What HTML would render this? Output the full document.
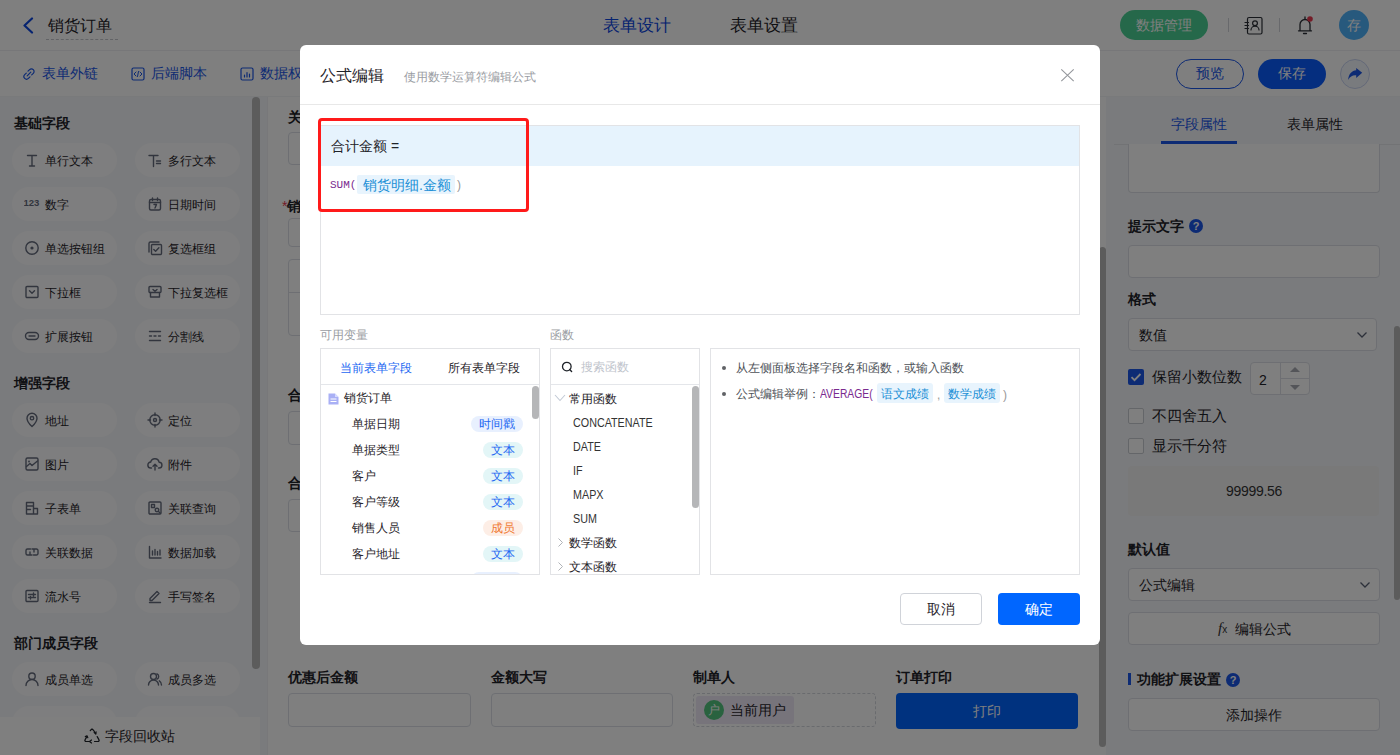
<!DOCTYPE html>
<html><head><meta charset="utf-8">
<style>
*{box-sizing:border-box;margin:0;padding:0}
html,body{width:1400px;height:755px;overflow:hidden;background:#fff;font-family:"Liberation Sans",sans-serif;color:#1f2329}
.abs{position:absolute}
.t{position:absolute;white-space:nowrap;line-height:1}
.b{font-weight:bold}
#hdr{position:absolute;left:0;top:0;width:1400px;height:51px;background:#fff;border-bottom:1px solid #eeeff2}
#tb{position:absolute;left:0;top:51px;width:1400px;height:46px;background:#fff;border-bottom:1px solid #f3f4f6}
#side{position:absolute;left:0;top:97px;width:268px;height:658px;background:#f5f7fa;border-right:1px solid #f0f1f4}
#canvas{position:absolute;left:268px;top:97px;width:838px;height:658px;background:#fff}
#rp{position:absolute;left:1106px;top:97px;width:294px;height:658px;background:#f5f7fa}
#ov{position:absolute;left:0;top:0;width:1400px;height:755px;background:rgba(0,0,0,.5)}
#modal{position:absolute;left:300px;top:45px;width:800px;height:600px;background:#fff;border-radius:6px}
.pill{position:absolute;width:105px;height:34px;border-radius:17px;background:#fdfdfe}
.pill .ic{position:absolute;left:12px;top:9px}
.pill span{position:absolute;left:33px;top:12px;font-size:12px;line-height:12px;white-space:nowrap;color:#1f2329}
.inp{position:absolute;border:1px solid #dcdfe6;border-radius:4px;background:#fff}
.lbl{position:absolute;white-space:nowrap;line-height:1;font-size:14px;font-weight:bold;color:#1f2329}
.tag{position:absolute;height:16px;border-radius:8px;font-size:12px;line-height:17px;text-align:center}
.fn{position:absolute;left:22px;font-size:12.5px;line-height:12px;color:#333;white-space:nowrap;transform:scaleX(.86);transform-origin:0 0}
</style></head><body>
<div id="hdr">
  <svg class="abs" style="left:22px;top:17px" width="12" height="17" viewBox="0 0 12 17"><path d="M10 1.5 L2.5 8.5 L10 15.5" fill="none" stroke="#0d47e0" stroke-width="2.2" stroke-linecap="round" stroke-linejoin="round"/></svg>
  <div class="t" style="left:48px;top:18px;font-size:16px;color:#1f2329">销货订单</div>
  <div class="abs" style="left:46px;top:39px;width:72px;border-top:1px dashed #c4c7cc"></div>
  <div class="t" style="left:603px;top:17px;font-size:16.5px;color:#0d47e0">表单设计</div>
  <div class="t" style="left:730px;top:17px;font-size:16.5px;color:#1f2329">表单设置</div>
  <div class="abs" style="left:1120px;top:10px;width:88px;height:30px;border-radius:15px;background:#4ad194"></div>
  <div class="t" style="left:1136px;top:18px;font-size:14px;color:#fff">数据管理</div>
  <div class="abs" style="left:1228px;top:18px;width:1px;height:14px;background:#d0d3d9"></div>
  <svg class="abs" style="left:1243px;top:16px" width="20" height="19" viewBox="0 0 20 19"><rect x="4.5" y="1.5" width="14.5" height="16.5" rx="1.5" fill="none" stroke="#2b2f36" stroke-width="1.2"/><circle cx="12" cy="7.2" r="2.4" fill="none" stroke="#2b2f36" stroke-width="1.2"/><path d="M8 14a4 3.8 0 0 1 8 0M2 6.5h3.5M2 9.5h3.5M2 12.5h3.5" fill="none" stroke="#2b2f36" stroke-width="1.2" stroke-linecap="round"/></svg>
  <div class="abs" style="left:1279px;top:18px;width:1px;height:14px;background:#d0d3d9"></div>
  <svg class="abs" style="left:1296px;top:15px" width="18" height="20" viewBox="0 0 18 20"><path d="M4 15.5V9.5a5 5 0 0 1 10 0v6M2.5 15.8h13" fill="none" stroke="#2b2f36" stroke-width="1.3" stroke-linecap="round" stroke-linejoin="round"/><path d="M7.5 18.5h3M9 2v2" stroke="#2b2f36" stroke-width="1.3" stroke-linecap="round"/><circle cx="14" cy="4" r="2.8" fill="#e8384f"/></svg>
  <div class="abs" style="left:1339px;top:10px;width:30px;height:30px;border-radius:15px;background:#4fb2fa"></div>
  <div class="t" style="left:1347px;top:18px;font-size:14px;color:#fff">存</div>
</div>
<div id="tb">
  <svg class="abs" style="left:22px;top:16px" width="14" height="14" viewBox="0 0 14 14"><path d="M6 4.2l1.6-1.6a2.6 2.6 0 0 1 3.7 3.7L9.7 7.9M8 9.8l-1.6 1.6a2.6 2.6 0 0 1-3.7-3.7L4.3 6.1M5.2 8.8l3.6-3.6" fill="none" stroke="#1a56e8" stroke-width="1.2" stroke-linecap="round"/></svg>
  <div class="t" style="left:42px;top:15px;font-size:14px;color:#1a56e8">表单外链</div>
  <svg class="abs" style="left:131px;top:16px" width="14" height="14" viewBox="0 0 14 14"><rect x="1" y="1" width="12" height="12" rx="1.5" fill="none" stroke="#1a56e8" stroke-width="1.2"/><path d="M5 5L3 7l2 2M9 5l2 2-2 2M7.5 4.5l-1 5" fill="none" stroke="#1a56e8" stroke-width="1" stroke-linecap="round"/></svg>
  <div class="t" style="left:151px;top:15px;font-size:14px;color:#1a56e8">后端脚本</div>
  <svg class="abs" style="left:240px;top:16px" width="14" height="14" viewBox="0 0 14 14"><rect x="1" y="1" width="12" height="12" rx="1.5" fill="none" stroke="#1a56e8" stroke-width="1.2"/><path d="M4.5 10V8M7 10V5.5M9.5 10V7" fill="none" stroke="#1a56e8" stroke-width="1.2" stroke-linecap="round"/></svg>
  <div class="t" style="left:260px;top:15px;font-size:14px;color:#1a56e8">数据权限</div>
  <div class="abs" style="left:1176px;top:8px;width:68px;height:30px;border-radius:15px;border:1px solid #1a56e8;background:#fff"></div>
  <div class="t" style="left:1196px;top:15px;font-size:14px;color:#1a56e8">预览</div>
  <div class="abs" style="left:1258px;top:8px;width:68px;height:30px;border-radius:15px;background:#0a5cff"></div>
  <div class="t" style="left:1278px;top:15px;font-size:14px;color:#fff">保存</div>
  <div class="abs" style="left:1340px;top:8px;width:30px;height:30px;border-radius:15px;border:1px solid #c8d3f0;background:#f3f6fd"></div>
  <svg class="abs" style="left:1347px;top:13px" width="17" height="17" viewBox="0 0 17 17"><path d="M1.2 15.9C1.5 10 5 6.5 9.2 6.2V4l6 4.8-6 5.1v-2.6C5.5 11 3 12.5 1.2 15.9z" fill="#1a56e8"/></svg>
</div>
<div id="side">
<div class="t b" style="left:14px;top:19px;font-size:14px">基础字段</div>
<div class="pill" style="left:12px;top:46px"><svg class="ic" width="16" height="16" viewBox="0 0 16 16"><path d="M3.5 3.5h9M5.5 14h5M8 3.5v10.5" fill="none" stroke="#646b7d" stroke-width="1.4" stroke-linecap="round" stroke-linejoin="round"/></svg><span>单行文本</span></div>
<div class="pill" style="left:135px;top:46px"><svg class="ic" width="16" height="16" viewBox="0 0 16 16"><path d="M2 3.5h9M6.5 3.5v11M9.5 9h4M9.5 11.5h4" fill="none" stroke="#646b7d" stroke-width="1.4" stroke-linecap="round" stroke-linejoin="round"/></svg><span>多行文本</span></div>
<div class="pill" style="left:12px;top:90px"><svg class="ic" width="16" height="16" viewBox="0 0 16 16"><text x="-0.5" y="10" font-family="Liberation Sans" font-weight="bold" font-size="9.5" fill="#646b7d">123</text></svg><span>数字</span></div>
<div class="pill" style="left:135px;top:90px"><svg class="ic" width="16" height="16" viewBox="0 0 16 16"><rect x="2.5" y="3.5" width="11" height="10.5" rx="1.5" fill="none" stroke="#646b7d" stroke-width="1.4" stroke-linecap="round" stroke-linejoin="round"/><path d="M2.5 6.5h11M5.5 2v2.5M10.5 2v2.5M7 8.5h2.5L8 12" fill="none" stroke="#646b7d" stroke-width="1.4" stroke-linecap="round" stroke-linejoin="round"/></svg><span>日期时间</span></div>
<div class="pill" style="left:12px;top:134px"><svg class="ic" width="16" height="16" viewBox="0 0 16 16"><circle cx="8" cy="8" r="6.2" fill="none" stroke="#646b7d" stroke-width="1.4" stroke-linecap="round" stroke-linejoin="round"/><circle cx="8" cy="8" r="1.6" fill="#646b7d"/></svg><span>单选按钮组</span></div>
<div class="pill" style="left:135px;top:134px"><svg class="ic" width="16" height="16" viewBox="0 0 16 16"><path d="M2 12V3.5Q2 2 3.5 2H12" fill="none" stroke="#646b7d" stroke-width="1.4" stroke-linecap="round" stroke-linejoin="round"/><rect x="4.5" y="4.5" width="10" height="10" rx="1" fill="none" stroke="#646b7d" stroke-width="1.4" stroke-linecap="round" stroke-linejoin="round"/><path d="M6.8 9.5l1.8 1.8 3.3-3.5" fill="none" stroke="#646b7d" stroke-width="1.4" stroke-linecap="round" stroke-linejoin="round"/></svg><span>复选框组</span></div>
<div class="pill" style="left:12px;top:178px"><svg class="ic" width="16" height="16" viewBox="0 0 16 16"><rect x="2" y="2.5" width="12" height="11" rx="1" fill="none" stroke="#646b7d" stroke-width="1.4" stroke-linecap="round" stroke-linejoin="round"/><path d="M5.5 6.8L8 9.2l2.5-2.4" fill="none" stroke="#646b7d" stroke-width="1.4" stroke-linecap="round" stroke-linejoin="round"/></svg><span>下拉框</span></div>
<div class="pill" style="left:135px;top:178px"><svg class="ic" width="16" height="16" viewBox="0 0 16 16"><rect x="2" y="2.5" width="12" height="6" rx="1" fill="none" stroke="#646b7d" stroke-width="1.4" stroke-linecap="round" stroke-linejoin="round"/><path d="M3.5 8.5v4.5h9V8.5M6 5.5l2 1.8 2-1.8" fill="none" stroke="#646b7d" stroke-width="1.4" stroke-linecap="round" stroke-linejoin="round"/></svg><span>下拉复选框</span></div>
<div class="pill" style="left:12px;top:222px"><svg class="ic" width="16" height="16" viewBox="0 0 16 16"><rect x="1.5" y="4.5" width="13" height="7" rx="3.5" fill="none" stroke="#646b7d" stroke-width="1.4" stroke-linecap="round" stroke-linejoin="round"/><path d="M5 8h6" fill="none" stroke="#646b7d" stroke-width="1.4" stroke-linecap="round" stroke-linejoin="round"/></svg><span>扩展按钮</span></div>
<div class="pill" style="left:135px;top:222px"><svg class="ic" width="16" height="16" viewBox="0 0 16 16"><path d="M2.5 3.5h11M2.5 12.5h11M2.5 8h2M7 8h2M11.5 8h2" fill="none" stroke="#646b7d" stroke-width="1.4" stroke-linecap="round" stroke-linejoin="round"/></svg><span>分割线</span></div>
<div class="t b" style="left:14px;top:279px;font-size:14px">增强字段</div>
<div class="pill" style="left:12px;top:306px"><svg class="ic" width="16" height="16" viewBox="0 0 16 16"><path d="M8 14.5s-5-4.6-5-8.3a5 5 0 0 1 10 0c0 3.7-5 8.3-5 8.3z" fill="none" stroke="#646b7d" stroke-width="1.4" stroke-linecap="round" stroke-linejoin="round"/><circle cx="8" cy="6.2" r="1.7" fill="none" stroke="#646b7d" stroke-width="1.4" stroke-linecap="round" stroke-linejoin="round"/></svg><span>地址</span></div>
<div class="pill" style="left:135px;top:306px"><svg class="ic" width="16" height="16" viewBox="0 0 16 16"><circle cx="8" cy="8" r="5.2" fill="none" stroke="#646b7d" stroke-width="1.4" stroke-linecap="round" stroke-linejoin="round"/><circle cx="8" cy="8" r="1.5" fill="none" stroke="#646b7d" stroke-width="1.4" stroke-linecap="round" stroke-linejoin="round"/><path d="M8 1v2.5M8 12.5V15M1 8h2.5M12.5 8H15" fill="none" stroke="#646b7d" stroke-width="1.4" stroke-linecap="round" stroke-linejoin="round"/></svg><span>定位</span></div>
<div class="pill" style="left:12px;top:350px"><svg class="ic" width="16" height="16" viewBox="0 0 16 16"><rect x="2" y="2" width="12" height="12" rx="1.5" fill="none" stroke="#646b7d" stroke-width="1.4" stroke-linecap="round" stroke-linejoin="round"/><path d="M2.5 10.5l3.5-3 2 2 5.5-4.5" fill="none" stroke="#646b7d" stroke-width="1.4" stroke-linecap="round" stroke-linejoin="round"/><circle cx="5" cy="5.5" r="0.9" fill="#646b7d"/></svg><span>图片</span></div>
<div class="pill" style="left:135px;top:350px"><svg class="ic" width="16" height="16" viewBox="0 0 16 16"><path d="M4.5 12H4a3 3 0 0 1-.3-6 4.3 4.3 0 0 1 8.4.2A2.9 2.9 0 0 1 12 12h-.5" fill="none" stroke="#646b7d" stroke-width="1.4" stroke-linecap="round" stroke-linejoin="round"/><path d="M8 14V8.5M6 10.2l2-2 2 2" fill="none" stroke="#646b7d" stroke-width="1.4" stroke-linecap="round" stroke-linejoin="round"/></svg><span>附件</span></div>
<div class="pill" style="left:12px;top:394px"><svg class="ic" width="16" height="16" viewBox="0 0 16 16"><path d="M2.5 14V2.5h7V14zM9.5 8.5h4V14h-11M2.5 6h7M2.5 9.5h4" fill="none" stroke="#646b7d" stroke-width="1.4" stroke-linecap="round" stroke-linejoin="round"/></svg><span>子表单</span></div>
<div class="pill" style="left:135px;top:394px"><svg class="ic" width="16" height="16" viewBox="0 0 16 16"><rect x="2" y="2" width="12" height="12" rx="1" fill="none" stroke="#646b7d" stroke-width="1.4" stroke-linecap="round" stroke-linejoin="round"/><rect x="4.5" y="4.5" width="3" height="3" fill="none" stroke="#646b7d" stroke-width="1.4" stroke-linecap="round" stroke-linejoin="round"/><circle cx="10" cy="10" r="1.8" fill="none" stroke="#646b7d" stroke-width="1.4" stroke-linecap="round" stroke-linejoin="round"/><path d="M11.3 11.3l2 2" fill="none" stroke="#646b7d" stroke-width="1.4" stroke-linecap="round" stroke-linejoin="round"/></svg><span>关联查询</span></div>
<div class="pill" style="left:12px;top:438px"><svg class="ic" width="16" height="16" viewBox="0 0 16 16"><path d="M6.5 5H3.5a1.5 1.5 0 0 0-1.5 1.5v3A1.5 1.5 0 0 0 3.5 11H8M9.5 11h3a1.5 1.5 0 0 0 1.5-1.5v-3A1.5 1.5 0 0 0 12.5 5H8M6 8v3M10 5v3" fill="none" stroke="#646b7d" stroke-width="1.4" stroke-linecap="round" stroke-linejoin="round"/></svg><span>关联数据</span></div>
<div class="pill" style="left:135px;top:438px"><svg class="ic" width="16" height="16" viewBox="0 0 16 16"><path d="M2.5 2.5v11.5h11.5M5.5 11V7M8 11V5.5M10.5 11V7.5M13 11V6" fill="none" stroke="#646b7d" stroke-width="1.4" stroke-linecap="round" stroke-linejoin="round"/></svg><span>数据加载</span></div>
<div class="pill" style="left:12px;top:482px"><svg class="ic" width="16" height="16" viewBox="0 0 16 16"><rect x="2" y="2.5" width="12" height="11" rx="1" fill="none" stroke="#646b7d" stroke-width="1.4" stroke-linecap="round" stroke-linejoin="round"/><path d="M4.5 6.5h7M4.5 9.5h7M9.5 5v3M6.5 8.5v2.5" fill="none" stroke="#646b7d" stroke-width="1.4" stroke-linecap="round" stroke-linejoin="round"/></svg><span>流水号</span></div>
<div class="pill" style="left:135px;top:482px"><svg class="ic" width="16" height="16" viewBox="0 0 16 16"><path d="M3 10.5l7-7 2 2-7 7H3zM2.5 14.5h11" fill="none" stroke="#646b7d" stroke-width="1.4" stroke-linecap="round" stroke-linejoin="round"/></svg><span>手写签名</span></div>
<div class="t b" style="left:14px;top:539px;font-size:14px">部门成员字段</div>
<div class="pill" style="left:12px;top:565px"><svg class="ic" width="16" height="16" viewBox="0 0 16 16"><circle cx="8" cy="5.2" r="3.2" fill="none" stroke="#646b7d" stroke-width="1.4" stroke-linecap="round" stroke-linejoin="round"/><path d="M2 14.5a6 6 0 0 1 12 0" fill="none" stroke="#646b7d" stroke-width="1.4" stroke-linecap="round" stroke-linejoin="round"/></svg><span>成员单选</span></div>
<div class="pill" style="left:135px;top:565px"><svg class="ic" width="16" height="16" viewBox="0 0 16 16"><circle cx="6.5" cy="5.5" r="3" fill="none" stroke="#646b7d" stroke-width="1.4" stroke-linecap="round" stroke-linejoin="round"/><path d="M1.5 14a5 5 0 0 1 10 0M10 2.8a3 3 0 0 1 0 5.4M12.3 9.8A5 5 0 0 1 14.5 14" fill="none" stroke="#646b7d" stroke-width="1.4" stroke-linecap="round" stroke-linejoin="round"/></svg><span>成员多选</span></div>
<div class="pill" style="left:12px;top:609px"></div><div class="pill" style="left:135px;top:609px"></div>
  <div class="abs" style="left:252px;top:0;width:8px;height:572px;border-radius:4px;background:#b9b9b9"></div>
  <div class="abs" style="left:0;top:620px;width:260px;height:38px;background:#fff"></div>
  <svg class="abs" style="left:84px;top:631px" width="16" height="16" viewBox="0 0 16 16"><path d="M6.3 2.5L8 0.9l1.7 1.6 2 3.4M13.2 8.6l1.7 3a1.2 1.2 0 0 1-1 1.9H10.5M5.3 13.5H2.1a1.2 1.2 0 0 1-1-1.9l1.8-3" fill="none" stroke="#1f2329" stroke-width="1.2" stroke-linecap="round" stroke-linejoin="round"/><path d="M10.2 4.5l1.6 1.4.3-2M3.8 9.7L3 7.8 1.3 8.6M7.5 12l-2 1.5 2 1.5" fill="none" stroke="#1f2329" stroke-width="1.2" stroke-linecap="round" stroke-linejoin="round"/></svg>
  <div class="t" style="left:105px;top:632px;font-size:14px;color:#1f2329">字段回收站</div>
</div>
<div id="canvas">
  <div class="lbl" style="left:20px;top:13px">关联</div>
  <div class="inp" style="left:20px;top:35px;width:183px;height:33px"></div>
  <div class="lbl" style="left:14px;top:102px"><span style="color:#e8384f;font-weight:normal">*</span>销货明细</div>
  <div class="inp" style="left:20px;top:121px;width:200px;height:29px"></div>
  <div class="inp" style="left:20px;top:162px;width:200px;height:77px"></div>
  <div class="abs" style="left:20px;top:195px;width:200px;height:1px;background:#dcdfe6"></div>
  <div class="lbl" style="left:20px;top:291px">合计</div>
  <div class="inp" style="left:20px;top:314px;width:183px;height:34px"></div>
  <div class="lbl" style="left:20px;top:379px">合计</div>
  <div class="inp" style="left:20px;top:402px;width:183px;height:33px"></div>
  <div class="lbl" style="left:20px;top:573px">优惠后金额</div>
  <div class="inp" style="left:20px;top:596px;width:183px;height:34px"></div>
  <div class="lbl" style="left:223px;top:573px">金额大写</div>
  <div class="inp" style="left:223px;top:596px;width:182px;height:34px"></div>
  <div class="lbl" style="left:425px;top:573px">制单人</div>
  <div class="abs" style="left:425px;top:596px;width:183px;height:34px;border:1px dashed #d3d6dc;border-radius:4px"></div>
  <div class="abs" style="left:428px;top:599px;width:98px;height:28px;border-radius:3px;background:#efe9f7"></div>
  <div class="abs" style="left:436px;top:603px;width:20px;height:20px;border-radius:10px;background:#52c47e"></div>
  <div class="t" style="left:440px;top:607px;font-size:12px;color:#fff">户</div>
  <div class="t" style="left:462px;top:606px;font-size:14px;color:#1f2329">当前用户</div>
  <div class="lbl" style="left:628px;top:573px">订单打印</div>
  <div class="abs" style="left:628px;top:596px;width:182px;height:36px;border-radius:4px;background:#0064ff"></div>
  <div class="t" style="left:705px;top:607px;font-size:14px;color:#fff">打印</div>
  <div class="abs" style="left:831px;top:150px;width:7px;height:500px;border-radius:4px;background:#b9b9b9"></div>
</div>
<div id="rp">
  <div class="t" style="left:65px;top:20px;font-size:14px;color:#1a56e8">字段属性</div>
  <div class="t" style="left:181px;top:20px;font-size:14px;color:#1f2329">表单属性</div>
  <div class="abs" style="left:8px;top:47px;width:286px;height:1px;background:#e4e6ea"></div>
  <div class="abs" style="left:55px;top:44px;width:76px;height:3px;background:#1a56e8"></div>
  <div class="inp" style="left:22px;top:47px;width:252px;height:49px;border-top:none;border-radius:0 0 4px 4px"></div>
  <div class="lbl" style="left:22px;top:122px">提示文字</div>
  <div class="abs" style="left:83px;top:122px;width:14px;height:14px;border-radius:7px;background:#1a56e8;color:#fff;font-size:11px;line-height:14px;text-align:center;font-weight:bold">?</div>
  <div class="inp" style="left:22px;top:148px;width:252px;height:33px"></div>
  <div class="lbl" style="left:22px;top:195px">格式</div>
  <div class="inp" style="left:22px;top:221px;width:249px;height:33px"></div>
  <div class="t" style="left:33px;top:231px;font-size:14px">数值</div>
  <svg class="abs" style="left:250px;top:234px" width="12" height="8" viewBox="0 0 12 8"><path d="M1.5 1.5L6 6l4.5-4.5" fill="none" stroke="#5b6275" stroke-width="1.3"/></svg>
  <div class="abs" style="left:22px;top:272px;width:16px;height:16px;border-radius:2px;background:#1a56e8"></div>
  <svg class="abs" style="left:22px;top:272px" width="16" height="16" viewBox="0 0 16 16"><path d="M3.5 8.2l3 3 6-6.2" fill="none" stroke="#fff" stroke-width="1.8"/></svg>
  <div class="t" style="left:46px;top:273px;font-size:14.5px">保留小数位数</div>
  <div class="inp" style="left:144px;top:265px;width:60px;height:33px"></div>
  <div class="abs" style="left:174px;top:266px;width:1px;height:31px;background:#dcdfe6"></div>
  <div class="abs" style="left:175px;top:281px;width:28px;height:1px;background:#dcdfe6"></div>
  <div class="t" style="left:153px;top:276px;font-size:14px">2</div>
  <svg class="abs" style="left:183px;top:269px" width="12" height="26" viewBox="0 0 12 26"><path d="M1 6h10L6 1z" fill="#a8abb2"/><path d="M1 19h10L6 24z" fill="#a8abb2"/></svg>
  <div class="abs" style="left:22px;top:311px;width:16px;height:16px;border-radius:2px;border:1px solid #c9ccd2;background:#fff"></div>
  <div class="t" style="left:46px;top:312px;font-size:14.5px">不四舍五入</div>
  <div class="abs" style="left:22px;top:341px;width:16px;height:16px;border-radius:2px;border:1px solid #c9ccd2;background:#fff"></div>
  <div class="t" style="left:46px;top:342px;font-size:14.5px">显示千分符</div>
  <div class="abs" style="left:22px;top:369px;width:251px;height:50px;border-radius:4px;background:#f3f3f3"></div>
  <div class="t" style="left:120px;top:387px;font-size:14px;color:#333;letter-spacing:-0.3px">99999.56</div>
  <div class="lbl" style="left:22px;top:445px">默认值</div>
  <div class="inp" style="left:22px;top:471px;width:252px;height:33px"></div>
  <div class="t" style="left:33px;top:481px;font-size:14px">公式编辑</div>
  <svg class="abs" style="left:253px;top:484px" width="12" height="8" viewBox="0 0 12 8"><path d="M1.5 1.5L6 6l4.5-4.5" fill="none" stroke="#5b6275" stroke-width="1.3"/></svg>
  <div class="inp" style="left:22px;top:515px;width:252px;height:33px"></div>
  <div class="t" style="left:112px;top:524px;font-size:15px;font-family:'Liberation Serif',serif;font-style:italic;color:#333">f<span style="font-size:10px;font-style:normal;font-family:'Liberation Sans',sans-serif">x</span></div>
  <div class="t" style="left:129px;top:525px;font-size:14px">编辑公式</div>
  <div class="abs" style="left:22px;top:576px;width:3px;height:12px;background:#1a56e8"></div>
  <div class="lbl" style="left:31px;top:575px">功能扩展设置</div>
  <div class="abs" style="left:120px;top:576px;width:14px;height:14px;border-radius:7px;background:#1a56e8;color:#fff;font-size:11px;line-height:14px;text-align:center;font-weight:bold">?</div>
  <div class="inp" style="left:22px;top:601px;width:252px;height:33px"></div>
  <div class="t" style="left:120px;top:611px;font-size:14px">添加操作</div>
  <div class="abs" style="left:288px;top:229px;width:6px;height:274px;border-radius:3px;background:#b9b9b9"></div>
</div>
<div id="ov"></div>
<div id="modal">
  <div class="t" style="left:20px;top:23px;font-size:16px;color:#1f2329">公式编辑</div>
  <div class="t" style="left:104px;top:26px;font-size:12px;color:#9a9da3">使用数学运算符编辑公式</div>
  <svg class="abs" style="left:760px;top:23px" width="15" height="14" viewBox="0 0 15 14"><path d="M1.3 1.3l12.4 11.8M13.7 1.3L1.3 13.1" stroke="#94979c" stroke-width="1.1"/></svg>
  <div class="abs" style="left:0;top:59px;width:800px;height:1px;background:#e8e8e8"></div>
  <!-- editor -->
  <div class="abs" style="left:20px;top:80px;width:760px;height:190px;border:1px solid #e2e3e6"></div>
  <div class="abs" style="left:21px;top:81px;width:758px;height:40px;background:#e6f3fd"></div>
  <div class="t" style="left:31px;top:94px;font-size:14px;color:#1f2329">合计金额 =</div>
  <div class="t" style="left:30px;top:135px;font-size:11px;font-family:'Liberation Mono',monospace;color:#7a2a8f">SUM(</div>
  <div class="abs" style="left:57px;top:130px;width:98px;height:19px;border-radius:2px;background:#e8f4fd"></div>
  <div class="t" style="left:63px;top:133px;font-size:14px;color:#1a8fd6">销货明细.金额</div>
  <div class="t" style="left:157px;top:134px;font-size:12px;color:#999">)</div>
  <div class="abs" style="left:18px;top:73px;width:211px;height:94px;border:3px solid #ff1a1a;border-radius:4px"></div>
  <!-- labels -->
  <div class="t" style="left:20px;top:284px;font-size:12px;color:#9a9da3">可用变量</div>
  <div class="t" style="left:250px;top:284px;font-size:12px;color:#9a9da3">函数</div>
  <!-- vars panel -->
  <div class="abs" style="left:20px;top:303px;width:220px;height:227px;border:1px solid #e2e3e6;overflow:hidden">
    <div class="t" style="left:19px;top:13px;font-size:12px;color:#2468f2">当前表单字段</div>
    <div class="t" style="left:127px;top:13px;font-size:12px;color:#1f2329">所有表单字段</div>
    <div class="abs" style="left:0;top:35px;width:220px;height:1px;background:#e4e6ea"></div>
    <svg class="abs" style="left:7px;top:44px" width="11" height="12" viewBox="0 0 11 12"><path d="M0.5 0.5h6.5l3.5 3.5v7.5h-10z" fill="#a9b0f5"/><path d="M2.5 6h6M2.5 8.5h6" stroke="#fff" stroke-width="1"/><path d="M7 0.5v3.5h3.5" fill="#d6daff"/></svg>
    <div class="t" style="left:23px;top:43px;font-size:12px;color:#1f2329">销货订单</div>
    <div class="t" style="left:31px;top:69px;font-size:12px;color:#1f2329">单据日期</div>
    <div class="tag" style="left:150px;top:67px;width:52px;background:#e8f0fe;color:#2468f2">时间戳</div>
    <div class="t" style="left:31px;top:95px;font-size:12px;color:#1f2329">单据类型</div>
    <div class="tag" style="left:162px;top:93px;width:40px;background:#e3f6f7;color:#2468f2">文本</div>
    <div class="t" style="left:31px;top:121px;font-size:12px;color:#1f2329">客户</div>
    <div class="tag" style="left:162px;top:119px;width:40px;background:#e3f6f7;color:#2468f2">文本</div>
    <div class="t" style="left:31px;top:147px;font-size:12px;color:#1f2329">客户等级</div>
    <div class="tag" style="left:162px;top:145px;width:40px;background:#e3f6f7;color:#2468f2">文本</div>
    <div class="t" style="left:31px;top:173px;font-size:12px;color:#1f2329">销售人员</div>
    <div class="tag" style="left:162px;top:171px;width:40px;background:#fdeee6;color:#f0782f">成员</div>
    <div class="t" style="left:31px;top:199px;font-size:12px;color:#1f2329">客户地址</div>
    <div class="tag" style="left:162px;top:197px;width:40px;background:#e3f6f7;color:#2468f2">文本</div>
    <div class="tag" style="left:150px;top:223px;width:52px;background:#e8f0fe"></div>
    <div class="abs" style="left:211px;top:37px;width:7px;height:33px;border-radius:4px;background:#b5b6b8"></div>
  </div>
  <!-- func panel -->
  <div class="abs" style="left:250px;top:303px;width:150px;height:227px;border:1px solid #e2e3e6;overflow:hidden">
    <svg class="abs" style="left:10px;top:12px" width="12" height="12" viewBox="0 0 12 12"><circle cx="5.8" cy="5.6" r="4.3" fill="none" stroke="#1f2329" stroke-width="1.3"/><path d="M8.6 8.6l2 2" stroke="#1f2329" stroke-width="1.4" stroke-linecap="round"/></svg>
    <div class="t" style="left:30px;top:12px;font-size:12px;color:#c0c4cc">搜索函数</div>
    <div class="abs" style="left:0;top:35px;width:150px;height:1px;background:#e4e6ea"></div>
    <svg class="abs" style="left:3px;top:45px" width="12" height="8" viewBox="0 0 12 8"><path d="M1 1l5 5.5 5-5.5" fill="none" stroke="#c3cad6" stroke-width="1.1"/></svg>
    <div class="t" style="left:18px;top:44px;font-size:12px;color:#1f2329">常用函数</div>
    <div class="fn" style="top:68px">CONCATENATE</div>
    <div class="fn" style="top:92px">DATE</div>
    <div class="fn" style="top:116px">IF</div>
    <div class="fn" style="top:140px">MAPX</div>
    <div class="fn" style="top:164px">SUM</div>
    <svg class="abs" style="left:7px;top:189px" width="5" height="9" viewBox="0 0 5 9"><path d="M0.5 0.5L4.5 4.5L0.5 8.5" fill="none" stroke="#b0b3b8" stroke-width="1"/></svg>
    <div class="t" style="left:18px;top:188px;font-size:12px;color:#1f2329">数学函数</div>
    <svg class="abs" style="left:7px;top:213px" width="5" height="9" viewBox="0 0 5 9"><path d="M0.5 0.5L4.5 4.5L0.5 8.5" fill="none" stroke="#b0b3b8" stroke-width="1"/></svg>
    <div class="t" style="left:18px;top:212px;font-size:12px;color:#1f2329">文本函数</div>
    <div class="abs" style="left:141px;top:37px;width:7px;height:122px;border-radius:4px;background:#b5b6b8"></div>
  </div>
  <!-- desc panel -->
  <div class="abs" style="left:410px;top:303px;width:370px;height:227px;border:1px solid #e2e3e6">
    <div class="abs" style="left:11px;top:17px;width:4px;height:4px;border-radius:2px;background:#606266"></div>
    <div class="t" style="left:25px;top:13px;font-size:12px;color:#4e5258">从左侧面板选择字段名和函数，或输入函数</div>
    <div class="abs" style="left:11px;top:43px;width:4px;height:4px;border-radius:2px;background:#606266"></div>
    <div class="t" style="left:25px;top:39px;font-size:12px;color:#4e5258">公式编辑举例：<span style="color:#7a2a8f;display:inline-block;transform:scaleX(.86);transform-origin:0 0">AVERAGE(</span></div>
    <div class="abs" style="left:166px;top:34px;width:56px;height:20px;border-radius:3px;background:#e8f4fd"></div>
    <div class="t" style="left:170px;top:39px;font-size:12px;color:#1a8fd6">语文成绩</div>
    <div class="t" style="left:226px;top:40px;font-size:12px;color:#999">,</div>
    <div class="abs" style="left:233px;top:34px;width:56px;height:20px;border-radius:3px;background:#e8f4fd"></div>
    <div class="t" style="left:237px;top:39px;font-size:12px;color:#1a8fd6">数学成绩</div>
    <div class="t" style="left:292px;top:40px;font-size:12px;color:#999">)</div>
  </div>
  <div class="abs" style="left:600px;top:548px;width:82px;height:32px;border:1px solid #d0d3d9;border-radius:4px"></div>
  <div class="t" style="left:627px;top:557px;font-size:14px;color:#1f2329">取消</div>
  <div class="abs" style="left:698px;top:548px;width:82px;height:32px;border-radius:4px;background:#0066ff"></div>
  <div class="t" style="left:725px;top:557px;font-size:14px;color:#fff">确定</div>
</div>
</body></html>
